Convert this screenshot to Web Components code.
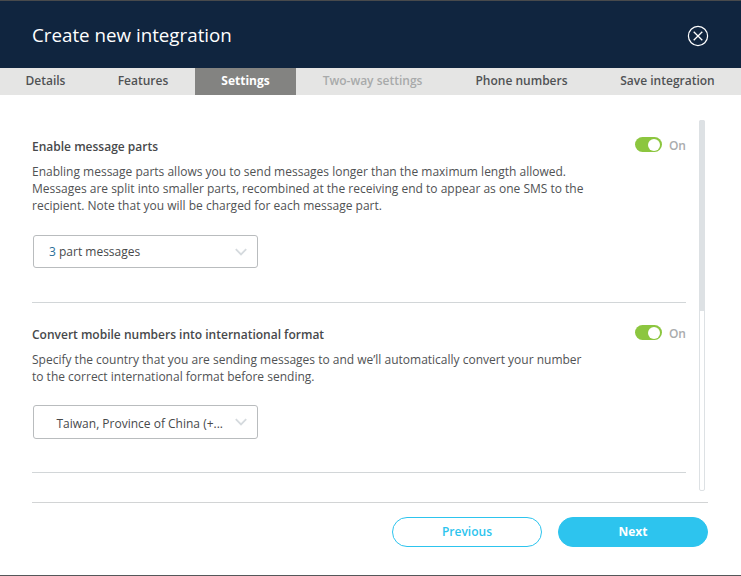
<!DOCTYPE html>
<html lang="en">
<head>
<meta charset="utf-8">
<title>Create new integration</title>
<style>
html,body{margin:0;height:100%;overflow:hidden}
body{font-family:"Open Sans","Noto Sans",sans-serif;font-size:12px;color:#505254;background:#fff}
</style>
</head>
<body>
<integration-dialog></integration-dialog>
<script>
function define(name, markup) {
  const template = document.createElement('template');
  template.innerHTML = markup;
  customElements.define(name, class extends HTMLElement {
    constructor() {
      super();
      this.attachShadow({ mode: 'open' }).append(template.content.cloneNode(true));
    }
  });
}

define('dialog-header', `
<style>
:host{display:flex;align-items:center;justify-content:space-between;box-sizing:border-box;height:68px;padding:1px 32px 0;background:#10253f;border-top:1px solid #484a4c;color:#fff}
h1{margin:0;font-size:18.75px;line-height:28px;font-weight:400}
svg{display:block;width:22px;height:22px;margin-top:2px}
</style>
<h1><slot></slot></h1>
<svg viewBox="0 0 22 22" fill="none" stroke="#fff"><circle cx="11" cy="11" r="9.6" stroke-width="1.2"/><path d="M6.7 6.7l8.6 8.6M15.3 6.7l-8.6 8.6" stroke-width="1.3"/></svg>`);

define('tab-bar', `
<style>:host{display:grid;grid-template-columns:91px 104px 101px 153px 145px 147px;height:27px;background:#e5e5e4}</style>
<slot></slot>`);

define('tab-item', `
<style>
:host{display:flex;justify-content:center;font-weight:600;font-size:12px;line-height:26px;color:#505254;white-space:nowrap}
:host([active]){background:#838381;color:#fff;font-weight:700}
:host([disabled]){color:#a8aaaa}
</style>
<span><slot></slot></span>`);

define('toggle-switch', `
<style>
:host{display:flex;align-items:flex-start;gap:7px;color:#aaacad;font-weight:600;line-height:17px}
i{box-sizing:border-box;display:flex;align-items:center;justify-content:flex-end;width:27px;height:15px;margin-top:1px;padding:0 2px;border-radius:8px;background:#8cc63f}
i::after{content:"";width:12px;height:12px;border-radius:50%;background:#fff}
span{padding-top:1px}
</style>
<i></i><span><slot></slot></span>`);

define('select-box', `
<style>
:host{display:flex;align-items:center;justify-content:space-between;box-sizing:border-box;width:225px;height:33px;margin-left:1px;padding:0 10px 0 15px;border:1px solid #b9bcbe;border-radius:3px;background:#fff;line-height:17px;color:#47494b}
:host([indent]){height:34px;padding-left:22.5px}
:host([indent]) span{padding-top:2px}
svg{width:12px;height:8px}
</style>
<span><slot></slot></span>
<svg viewBox="0 0 12 8" fill="none" stroke="#d5dade" stroke-width="1.8"><path d="M.8 1.2L6 6.5l5.2-5.3"/></svg>`);

define('setting-section', `
<style>
:host{display:block;box-sizing:border-box;border-bottom:1px solid #d2d6d8}
header{display:flex;justify-content:space-between;height:27px}
h2{margin:2px 0 0;font-size:12px;line-height:17px;font-weight:600;color:#47494b;white-space:nowrap}
p{margin:0 0 var(--text-gap,21px);line-height:17px;white-space:nowrap}
.toggle{height:17px}
</style>
<header><h2><slot name="title"></slot></h2><div class="toggle"><slot name="toggle"></slot></div></header>
<p><slot name="text"></slot></p>
<slot></slot>`);

define('scroll-bar', `
<style>
:host{display:block;box-sizing:border-box;width:6px;height:371px;border:1px solid #dde1e4;border-radius:2px}
div{width:6px;height:191px;margin:-1px;background:#dde1e4;border-radius:2px 2px 0 0}
</style><div></div>`);

define('pill-button', `
<style>
:host{display:block;width:150px}
button{display:block;box-sizing:border-box;width:100%;height:30px;padding:0 0 1px;border:1px solid #2dc4ee;border-radius:15px;background:#fff;color:#2dc4ee;font:600 12px/27px "Open Sans","Noto Sans",sans-serif}
:host([primary]) button{background:#2dc4ee;color:#fff;font-weight:700}
</style>
<button><slot></slot></button>`);

define('integration-dialog', `
<style>
:host{display:flex;flex-direction:column;box-sizing:border-box;width:741px;height:576px;border-bottom:1px solid #555759;background:#fff}
main{display:flex;justify-content:space-between;height:382px;margin:25px 36px 0 32px}
.content{width:654px}
.first{height:167px;margin-top:16px}
.second{height:149px;margin-top:21px;--text-gap:20px}
footer{display:flex;justify-content:flex-end;gap:16px;margin:0 33px 0 32px;padding-top:14px;border-top:1px solid #d2d4d5}
.num{color:#2a6f98}
</style>
<dialog-header>Create new integration</dialog-header>
<tab-bar>
<tab-item>Details</tab-item><tab-item>Features</tab-item><tab-item active>Settings</tab-item><tab-item disabled>Two-way settings</tab-item><tab-item>Phone numbers</tab-item><tab-item>Save integration</tab-item>
</tab-bar>
<main>
<div class="content">
<setting-section class="first">
<span slot="title">Enable message parts</span><toggle-switch slot="toggle">On</toggle-switch>
<span slot="text">Enabling message parts allows you to send messages longer than the maximum length allowed.<br>Messages are split into smaller parts, recombined at the receiving end to appear as one SMS to the<br>recipient. Note that you will be charged for each message part.</span>
<select-box><span class="num">3</span> part messages</select-box>
</setting-section>
<setting-section class="second">
<span slot="title">Convert mobile numbers into international format</span><toggle-switch slot="toggle">On</toggle-switch>
<span slot="text">Specify the country that you are sending messages to and we’ll automatically convert your number<br>to the correct international format before sending.</span>
<select-box indent>Taiwan, Province of China (+...</select-box>
</setting-section>
</div>
<scroll-bar></scroll-bar>
</main>
<footer><pill-button>Previous</pill-button><pill-button primary>Next</pill-button></footer>`);
</script>
</body>
</html>
